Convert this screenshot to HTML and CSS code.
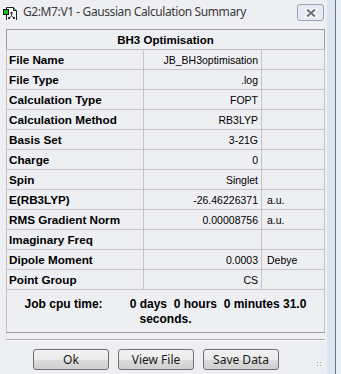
FILE: index.html
```html
<!DOCTYPE html>
<html lang="en">

<head>
    <meta charset="UTF-8">
    <title>G2:M7:V1 - Gaussian Calculation Summary</title>
    <link rel="stylesheet" href="styles.css">
</head>

<body>
    <div class="window">
        <div class="main">
            <div class="titlebar">
                <svg class="app-icon" width="16" height="16" viewBox="0 0 16 16">
                    <path d="M5.5 3.5h7l3 3v10h-10z" fill="#fff" stroke="#222"/>
                    <path d="M12.5 3.5v3h3" fill="#5cd04a" stroke="#222"/>
                    <rect x="2.5" y="5.5" width="5" height="5" fill="#22c022" stroke="#111"/>
                    <path d="M10.5 9v3M10.5 12l-2.5 2M10.5 12l2.5 2" stroke="#333" stroke-width="1"/>
                    <circle cx="10.5" cy="9" r="1.2" fill="#333"/>
                    <circle cx="8" cy="14" r="1.2" fill="#333"/>
                    <circle cx="13" cy="14" r="1.2" fill="#333"/>
                </svg>
                <span class="title">G2:M7:V1 - Gaussian Calculation Summary</span>
                <div class="close-btn">
                    <svg width="14" height="10" viewBox="0 0 14 10">
                        <path d="M3 1.5l8 7M11 1.5l-8 7" stroke="#fff" stroke-width="4.2" stroke-linecap="square"/>
                        <path d="M3 1.5l8 7M11 1.5l-8 7" stroke="#6b7380" stroke-width="2.2"/>
                    </svg>
                </div>
            </div>

            <div class="client">
                <table class="summary">
                    <thead>
                        <tr>
                            <th colspan="3">BH3 Optimisation</th>
                        </tr>
                    </thead>
                    <tbody>
                        <tr><td class="label">File Name</td><td class="value">JB_BH3optimisation</td><td class="unit"></td></tr>
                        <tr><td class="label">File Type</td><td class="value">.log</td><td class="unit"></td></tr>
                        <tr><td class="label">Calculation Type</td><td class="value">FOPT</td><td class="unit"></td></tr>
                        <tr><td class="label">Calculation Method</td><td class="value">RB3LYP</td><td class="unit"></td></tr>
                        <tr><td class="label">Basis Set</td><td class="value">3-21G</td><td class="unit"></td></tr>
                        <tr><td class="label">Charge</td><td class="value">0</td><td class="unit"></td></tr>
                        <tr><td class="label">Spin</td><td class="value">Singlet</td><td class="unit"></td></tr>
                        <tr><td class="label">E(RB3LYP)</td><td class="value">-26.46226371</td><td class="unit">a.u.</td></tr>
                        <tr><td class="label">RMS Gradient Norm</td><td class="value">0.00008756</td><td class="unit">a.u.</td></tr>
                        <tr><td class="label">Imaginary Freq</td><td class="value"></td><td class="unit"></td></tr>
                        <tr><td class="label">Dipole Moment</td><td class="value">0.0003</td><td class="unit">Debye</td></tr>
                        <tr><td class="label">Point Group</td><td class="value">CS</td><td class="unit"></td></tr>
                        <tr>
                            <td colspan="3" class="cpu">
                                <span class="cpu-label">Job cpu time:</span>0 days&nbsp; 0 hours&nbsp; 0 minutes 31.0<br>seconds.
                            </td>
                        </tr>
                    </tbody>
                </table>

                <div class="separator"></div>

                <div class="buttons">
                    <button class="btn">Ok</button>
                    <button class="btn">View File</button>
                    <button class="btn">Save Data</button>
                </div>
                <div class="grip"></div>
            </div>
        </div>
        <div class="frame-right"></div>
    </div>
</body>

</html>
```

FILE: styles.css
```css
body {
    margin: 0;
    padding: 0;
    background-color: #e9edf4;
    font-family: "Liberation Sans", Arial, sans-serif;
}

.window {
    display: flex;
    width: 341px;
    height: 374px;
    overflow: hidden;
}

.main {
    width: 327px;
    background-color: #eeeff3;
    display: flex;
    flex-direction: column;
}

.frame-right {
    width: 8px;
    background-color: #dde5f1;
    border-right: 1px solid #6d7583;
}

/* title bar */
.titlebar {
    height: 23px;
    display: flex;
    align-items: center;
    position: relative;
}

.app-icon {
    margin-left: 1px;
    margin-top: 1px;
}

.title {
    margin-left: 6px;
    font-family: "Noto Sans", sans-serif;
    font-size: 12px;
    letter-spacing: -0.4px;
    color: #3a3a3a;
}

.close-btn {
    position: absolute;
    left: 297px;
    top: 4px;
    width: 25px;
    height: 15px;
    border: 1px solid #9aa3b4;
    border-radius: 3px;
    display: flex;
    align-items: center;
    justify-content: center;
    background-color: #e6ebf3;
}

/* client area */
.client {
    padding: 6px 0 0 6px;
    position: relative;
    flex: 1;
}

.summary {
    border-collapse: collapse;
    width: 319px;
    border: 1px solid #9c9c9c;
    font-size: 11.7px;
    color: #000;
}

.summary th {
    height: 19px;
    padding: 0;
    font-size: 11.5px;
    font-weight: bold;
    text-align: center;
    border-bottom: 1px solid #bdbdbd;
}

.summary td {
    height: 19px;
    padding: 0;
    border: 1px solid #c6c4c6;
    white-space: nowrap;
}

.label {
    width: 134px;
    padding-left: 2px !important;
    font-weight: bold;
}

.value {
    width: 114px;
    padding-right: 3px !important;
    text-align: right;
    font-size: 10.5px;
}

.unit {
    padding-left: 5px !important;
    font-size: 10.5px;
}

.summary td.cpu {
    height: 40px;
    text-align: center;
    font-size: 12px;
    font-weight: bold;
    line-height: 15px;
    padding-top: 2px;
    border-bottom: 1px solid #9c9c9c;
}

.cpu-label {
    margin-right: 27px;
}

.separator {
    width: 319px;
    margin-top: 6px;
    border-top: 1px solid #a8a8a8;
    border-bottom: 1px solid #ffffff;
}

.buttons {
    display: flex;
    gap: 9px;
    margin-top: 8px;
    margin-left: 27px;
}

.btn {
    width: 76px;
    height: 21px;
    padding: 0;
    border: 1px solid #707070;
    border-radius: 3px;
    background: linear-gradient(to bottom, #f2f2f2 0%, #ebebeb 50%, #dddddd 51%, #cfcfcf 100%);
    font-family: "Noto Sans", sans-serif;
    font-size: 12px;
    color: #1a1a1a;
}

.grip {
    position: absolute;
    right: 5px;
    bottom: 7px;
    width: 6px;
    height: 6px;
    background-image: radial-gradient(circle, #a0a0a0 0.7px, transparent 0.8px);
    background-size: 3px 3px;
}
```
